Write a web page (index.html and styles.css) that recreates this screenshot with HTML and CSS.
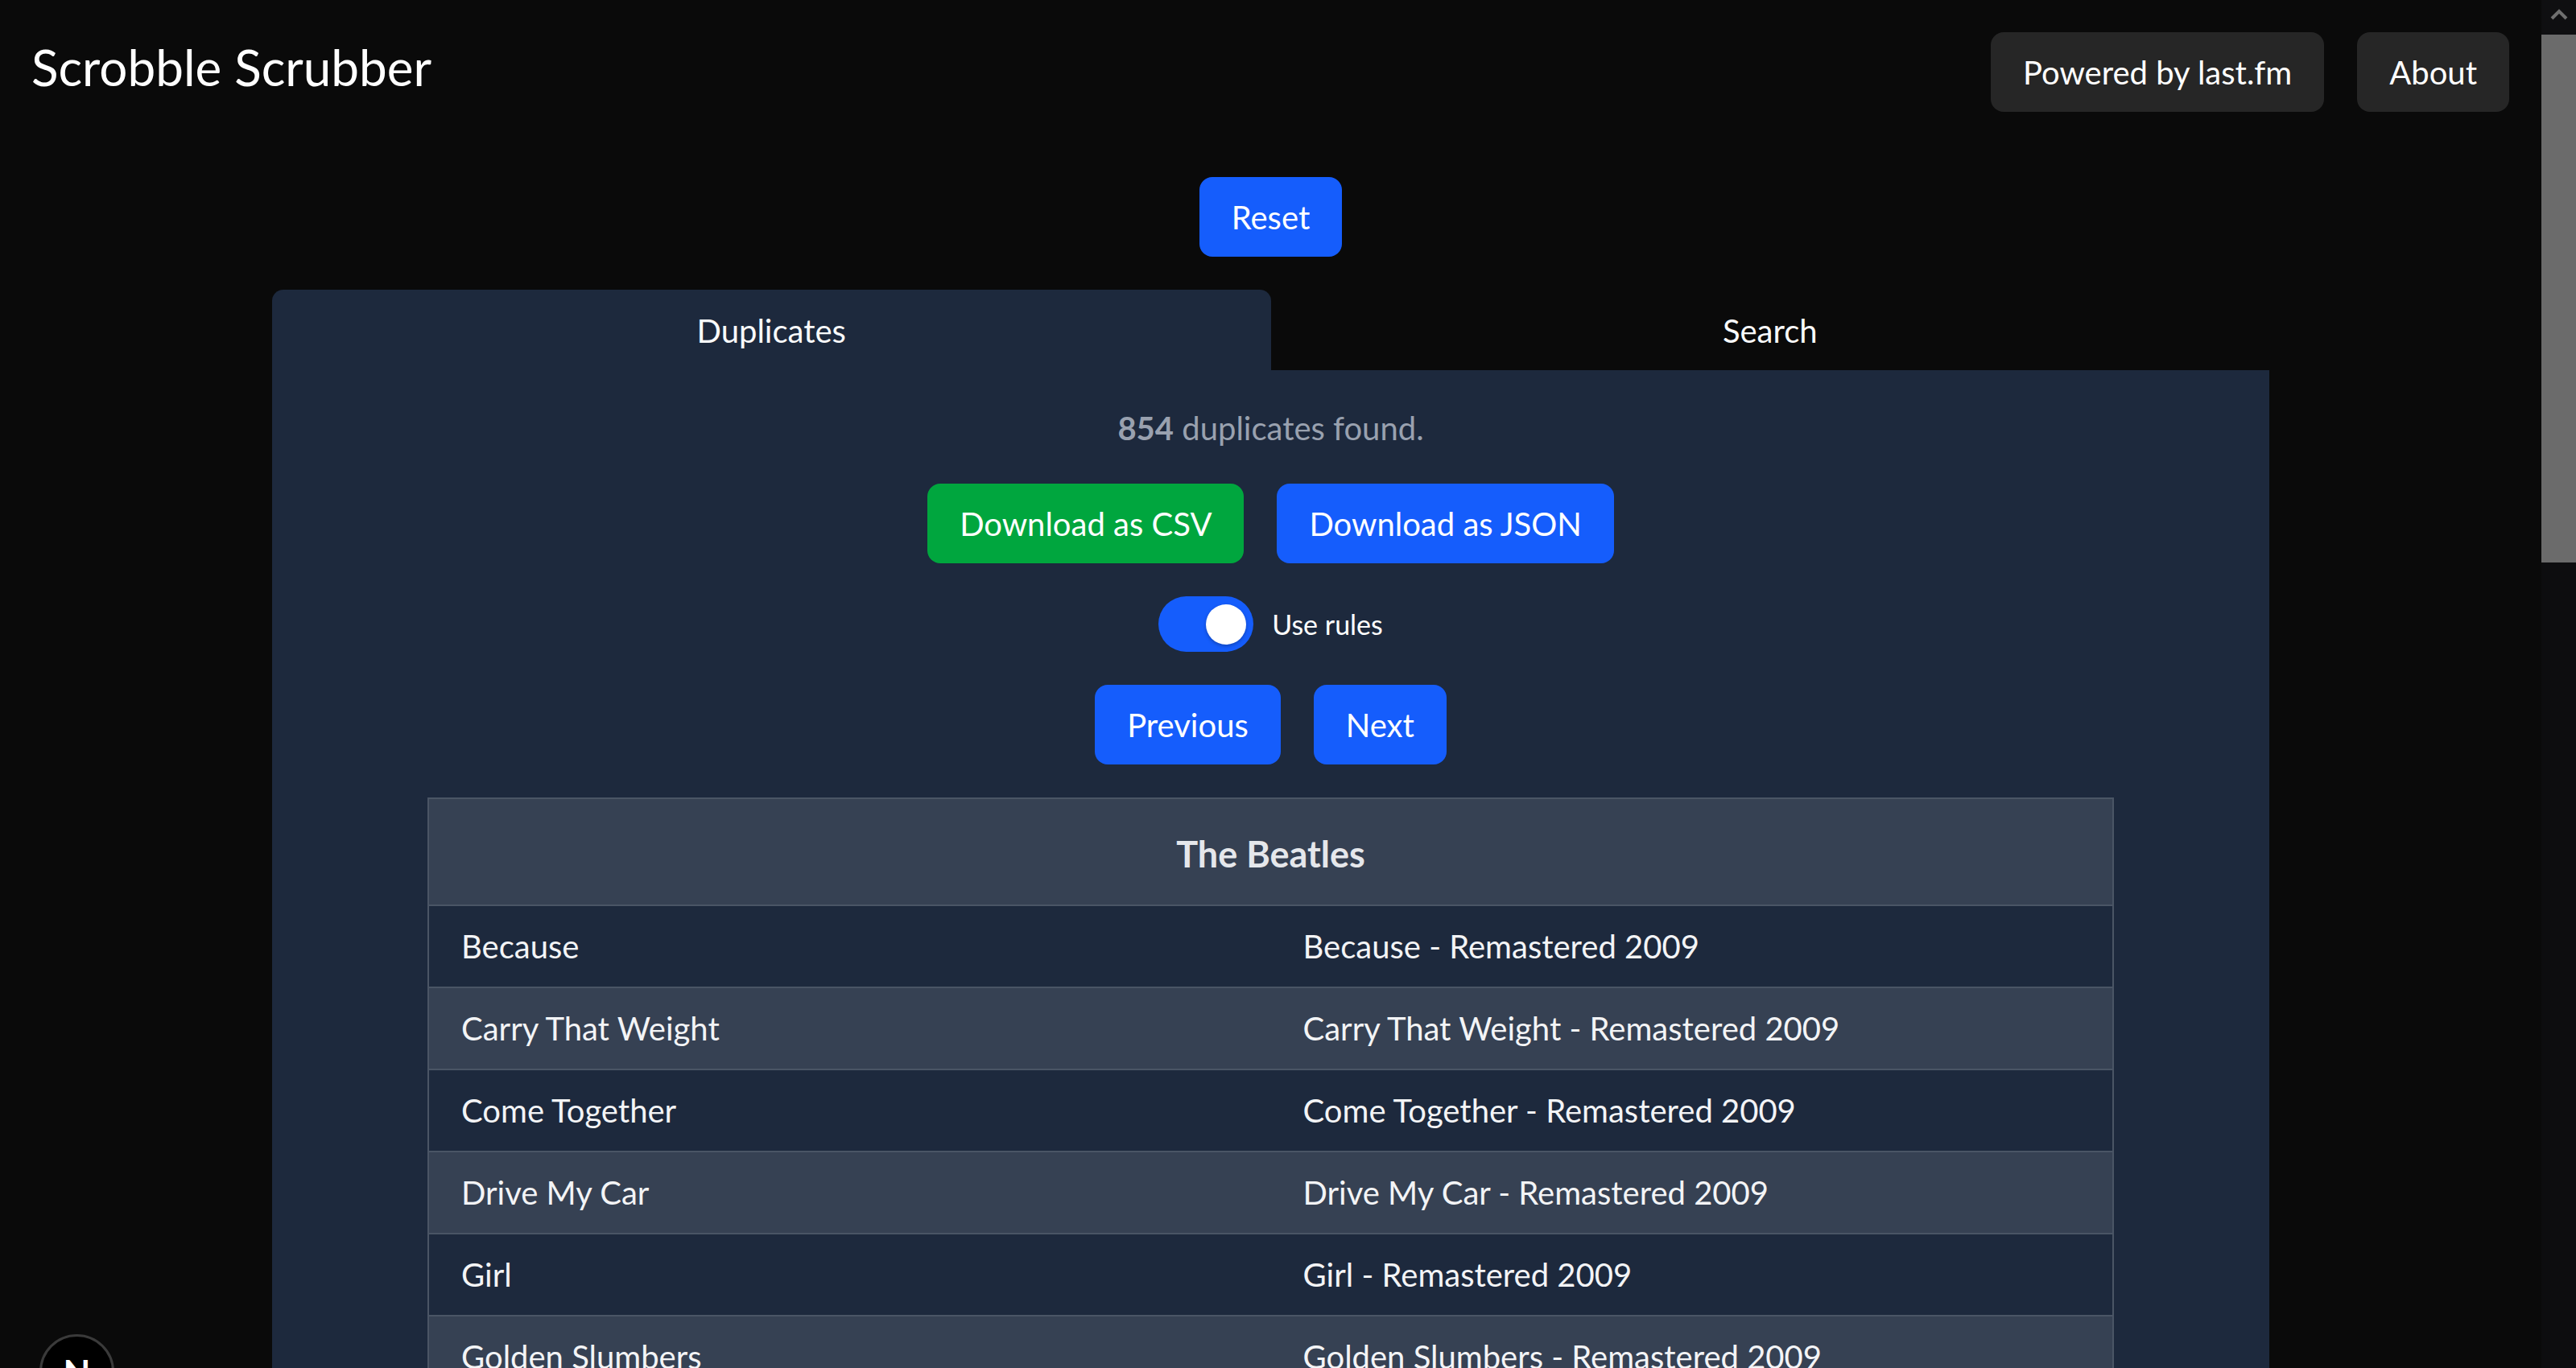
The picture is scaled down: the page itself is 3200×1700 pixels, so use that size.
FILE: index.html
```html
<!DOCTYPE html>
<html lang="en">
<head>
<meta charset="utf-8">
<title>Scrobble Scrubber</title>
<link rel="stylesheet" href="styles.css">
</head>
<body>
<div class="app">
  <div class="page">
    <header class="topbar">
      <h1 class="title">Scrobble Scrubber</h1>
      <nav class="top-actions">
        <button class="btn btn-dark">Powered by last.fm</button>
        <button class="btn btn-dark">About</button>
      </nav>
    </header>

    <div class="reset-row">
      <button class="btn btn-blue">Reset</button>
    </div>

    <section class="tabs-wrap">
      <div class="tabs">
        <div class="tab active">Duplicates</div>
        <div class="tab">Search</div>
      </div>
      <div class="panel">
        <p class="count"><b>854</b> duplicates found.</p>
        <div class="btn-row">
          <button class="btn btn-green">Download as CSV</button>
          <button class="btn btn-blue">Download as JSON</button>
        </div>
        <label class="switch-row">
          <span class="switch"><span class="knob"></span></span>
          <span class="switch-label">Use rules</span>
        </label>
        <div class="btn-row">
          <button class="btn btn-blue">Previous</button>
          <button class="btn btn-blue">Next</button>
        </div>
        <table class="dups">
          <thead>
            <tr><th colspan="2">The Beatles</th></tr>
          </thead>
          <tbody>
            <tr><td>Because</td><td>Because - Remastered 2009</td></tr>
            <tr><td>Carry That Weight</td><td>Carry That Weight - Remastered 2009</td></tr>
            <tr><td>Come Together</td><td>Come Together - Remastered 2009</td></tr>
            <tr><td>Drive My Car</td><td>Drive My Car - Remastered 2009</td></tr>
            <tr><td>Girl</td><td>Girl - Remastered 2009</td></tr>
            <tr><td>Golden Slumbers</td><td>Golden Slumbers - Remastered 2009</td></tr>
            <tr><td>Here Comes The Sun</td><td>Here Comes The Sun - Remastered 2009</td></tr>
          </tbody>
        </table>
      </div>
    </section>
  </div>

  <div class="scrollbar" aria-hidden="true">
    <div class="sb-up">
      <svg width="22" height="14" viewBox="0 0 22 14"><polyline points="2,12 11,3 20,12" fill="none" stroke="#6f6f6f" stroke-width="4"/></svg>
    </div>
    <div class="sb-thumb"></div>
    <div class="sb-track"></div>
  </div>
</div>

<div class="next-badge">N</div>
</body>
</html>
```
FILE: styles.css
```css
html, body {
  margin: 0;
  height: 100%;
  overflow: hidden;
}

body {
  background: #0a0a0a;
  color: #ffffff;
  font-family: Lato, "Open Sans", sans-serif;
}

.app {
  display: flex;
  height: 1700px;
}

.page {
  flex: 1;
  min-width: 0;
  overflow: hidden;
}

/* ---------- header ---------- */
.topbar {
  display: flex;
  justify-content: space-between;
  align-items: flex-start;
  padding: 40px 40px 0 39px;
}

.title {
  margin: 7px 0 0;
  font-size: 62px;
  font-weight: 400;
  line-height: 72px;
  color: #ffffff;
}

.top-actions {
  display: flex;
  gap: 41px;
}

/* ---------- buttons ---------- */
.btn {
  font-family: inherit;
  font-size: 40px;
  line-height: 56px;
  padding: 22px 40px 21px;
  border: 0;
  border-radius: 16px;
  color: #ffffff;
  cursor: pointer;
  white-space: nowrap;
}

.btn-dark { background: #262626; }
.btn-blue { background: #155dfc; }
.btn-green { background: #00a63e; }

.reset-row {
  display: flex;
  justify-content: center;
  margin-top: 81px;
}

/* ---------- tabs ---------- */
.tabs-wrap {
  width: 2481px;
  margin: 41px auto 0;
}

.tabs {
  display: flex;
  height: 100px;
}

.tab {
  flex: 1;
  display: flex;
  align-items: center;
  justify-content: center;
  font-size: 40px;
  padding-top: 2px;
  color: #f9fafb;
  border-radius: 14px 14px 0 0;
}

.tab.active { background: #1d293d; }

.panel {
  background: #1d293d;
  padding-top: 44px;
  padding-bottom: 60px;
  display: flex;
  flex-direction: column;
  align-items: center;
  gap: 41px;
}

.count {
  margin: 0;
  font-size: 40px;
  line-height: 56px;
  color: #99a1af;
}

.count b { font-weight: 700; }

.btn-row {
  display: flex;
  gap: 41px;
}

/* ---------- switch ---------- */
.switch-row {
  display: flex;
  align-items: center;
  gap: 23px;
  font-size: 34px;
  color: #ffffff;
}

.switch {
  width: 118px;
  height: 69px;
  box-sizing: border-box;
  border-radius: 35px;
  background: #155dfc;
  display: flex;
  align-items: center;
  justify-content: flex-end;
  padding-right: 9px;
}

.knob {
  width: 50px;
  height: 50px;
  border-radius: 50%;
  background: #ffffff;
  box-shadow: 0 2px 4px rgba(0, 0, 0, 0.25);
}

/* ---------- table ---------- */
.dups {
  width: 2095px;
  border-collapse: separate;
  border-spacing: 0;
  border: 2px solid #4a5565;
  border-bottom: 0;
  table-layout: fixed;
}

.dups th {
  background: #364153;
  color: #e5e7eb;
  font-size: 45px;
  font-weight: 700;
  line-height: 58px;
  padding: 39px 0 34px;
}

.dups td {
  width: 50%;
  padding: 22px 40px;
  font-size: 40px;
  line-height: 56px;
  color: #f3f4f6;
  border-top: 2px solid #4a5565;
  text-align: left;
  white-space: nowrap;
}

.dups tbody tr { background: #1d293d; }
.dups tbody tr:nth-child(even) { background: #364153; }

/* ---------- scrollbar ---------- */
.scrollbar {
  width: 43px;
  flex: none;
  display: flex;
  flex-direction: column;
  background: #0d0d0f;
}

.sb-up {
  height: 43px;
  display: flex;
  align-items: center;
  justify-content: center;
  background: #0f0f11;
}

.sb-up svg { margin-top: -8px; }

.sb-thumb {
  height: 656px;
  background: #6b6b6b;
}

.sb-track { flex: 1; }

/* ---------- dev badge ---------- */
.next-badge {
  position: fixed;
  left: 49px;
  top: 1658px;
  width: 93px;
  height: 93px;
  box-sizing: border-box;
  border-radius: 50%;
  background: #000000;
  border: 3px solid #3a3a3a;
  color: #ffffff;
  font-family: Lato, sans-serif;
  font-weight: 700;
  font-size: 44px;
  display: flex;
  align-items: center;
  justify-content: center;
}
```
